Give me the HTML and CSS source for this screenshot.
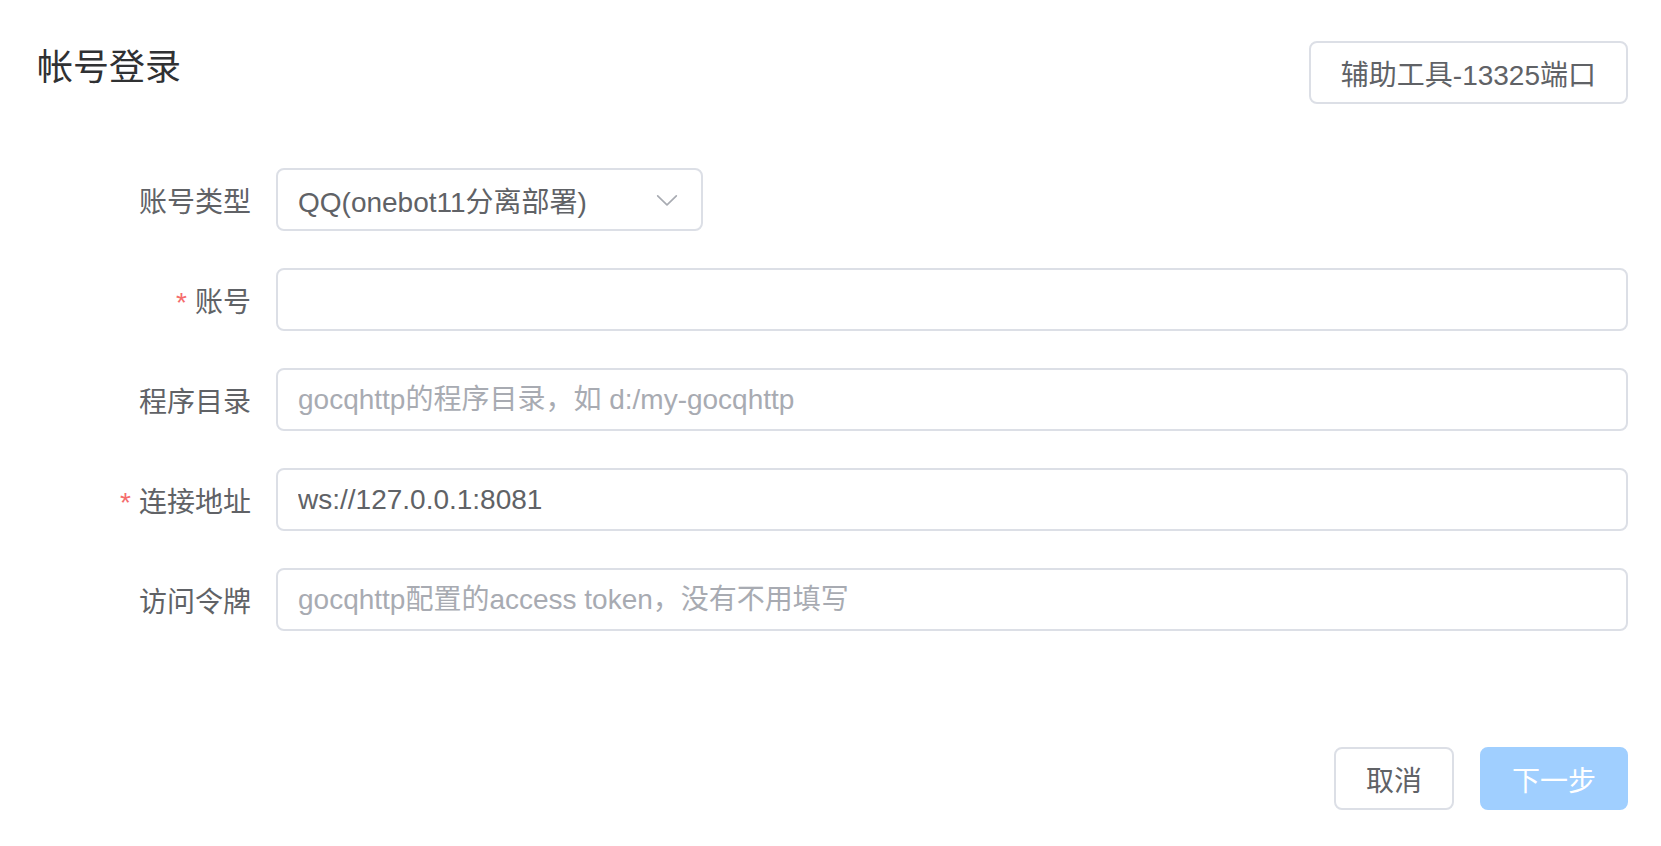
FILE: index.html
```html
<!DOCTYPE html>
<html lang="zh-CN">
<head>
  <meta charset="UTF-8" />
  <title>帐号登录</title>
  <link rel="stylesheet" href="styles.css">
</head>
<body>
  <div class="dialog">
    <div class="header">
      <div class="title">帐号登录</div>
      <button class="btn">辅助工具-13325端口</button>
    </div>

    <form class="form">
      <div class="form-item">
        <label class="label">账号类型</label>
        <div class="select">
          <span class="select-value">QQ(onebot11分离部署)</span>
          <svg class="arrow" viewBox="0 0 1024 1024"><path fill="currentColor" d="M831.872 340.864 512 652.672 192.128 340.864a30.592 30.592 0 0 0-42.752 0 29.12 29.12 0 0 0 0 41.6L489.664 714.24a32 32 0 0 0 44.672 0l340.288-331.712a29.12 29.12 0 0 0 0-41.728 30.592 30.592 0 0 0-42.752 0z"/></svg>
        </div>
      </div>
      <div class="form-item">
        <label class="label"><span class="req">*</span>账号</label>
        <input class="input" type="text" value="">
      </div>
      <div class="form-item">
        <label class="label">程序目录</label>
        <input class="input" type="text" placeholder="gocqhttp的程序目录，如 d:/my-gocqhttp">
      </div>
      <div class="form-item">
        <label class="label"><span class="req">*</span>连接地址</label>
        <input class="input" type="text" value="ws://127.0.0.1:8081">
      </div>
      <div class="form-item">
        <label class="label">访问令牌</label>
        <input class="input" type="text" placeholder="gocqhttp配置的access token，没有不用填写">
      </div>
    </form>

    <div class="footer">
      <button class="btn">取消</button>
      <button class="btn primary" disabled>下一步</button>
    </div>
  </div>
</body>
</html>
```

FILE: styles.css
```css
body {
  margin: 0;
  background-color: #ffffff;
  font-family: "Liberation Sans", "Noto Sans CJK SC", sans-serif;
  color: #606266;
}

.dialog {
  padding: 41px 33px 0 37px;
}

.header {
  display: flex;
  justify-content: space-between;
  align-items: flex-start;
}

.title {
  margin-top: 9px;
  font-size: 36px;
  line-height: 36px;
  color: #303133;
}

.btn {
  height: 63px;
  padding: 0 30px;
  font-family: inherit;
  font-size: 28px;
  color: #606266;
  background-color: #ffffff;
  border: 2px solid #dcdfe6;
  border-radius: 8px;
  cursor: pointer;
}

.btn.primary {
  padding: 0 30px;
  color: #ffffff;
  background-color: #a0cfff;
  border-color: #a0cfff;
  cursor: not-allowed;
}

.form {
  margin-top: 64px;
}

.form-item {
  display: flex;
  align-items: center;
  margin-bottom: 37px;
}

.form-item:last-child {
  margin-bottom: 0;
}

.label {
  width: 239px;
  box-sizing: border-box;
  padding-right: 25px;
  text-align: right;
  font-size: 28px;
  color: #606266;
}

.req {
  margin-right: 8px;
  color: #f56c6c;
}

.input,
.select {
  box-sizing: border-box;
  height: 63px;
  border: 2px solid #dcdfe6;
  border-radius: 8px;
  font-family: inherit;
  font-size: 28px;
  color: #606266;
  background-color: #ffffff;
}

.input {
  flex: 1;
  padding: 0 20px;
  outline: none;
}

.input::placeholder {
  color: #a8abb2;
}

.select {
  display: flex;
  align-items: center;
  justify-content: space-between;
  width: 427px;
  padding: 0 20px;
}

.arrow {
  width: 28px;
  height: 28px;
  color: #a8abb2;
}

.footer {
  display: flex;
  justify-content: flex-end;
  gap: 26px;
  margin-top: 116px;
}
```
